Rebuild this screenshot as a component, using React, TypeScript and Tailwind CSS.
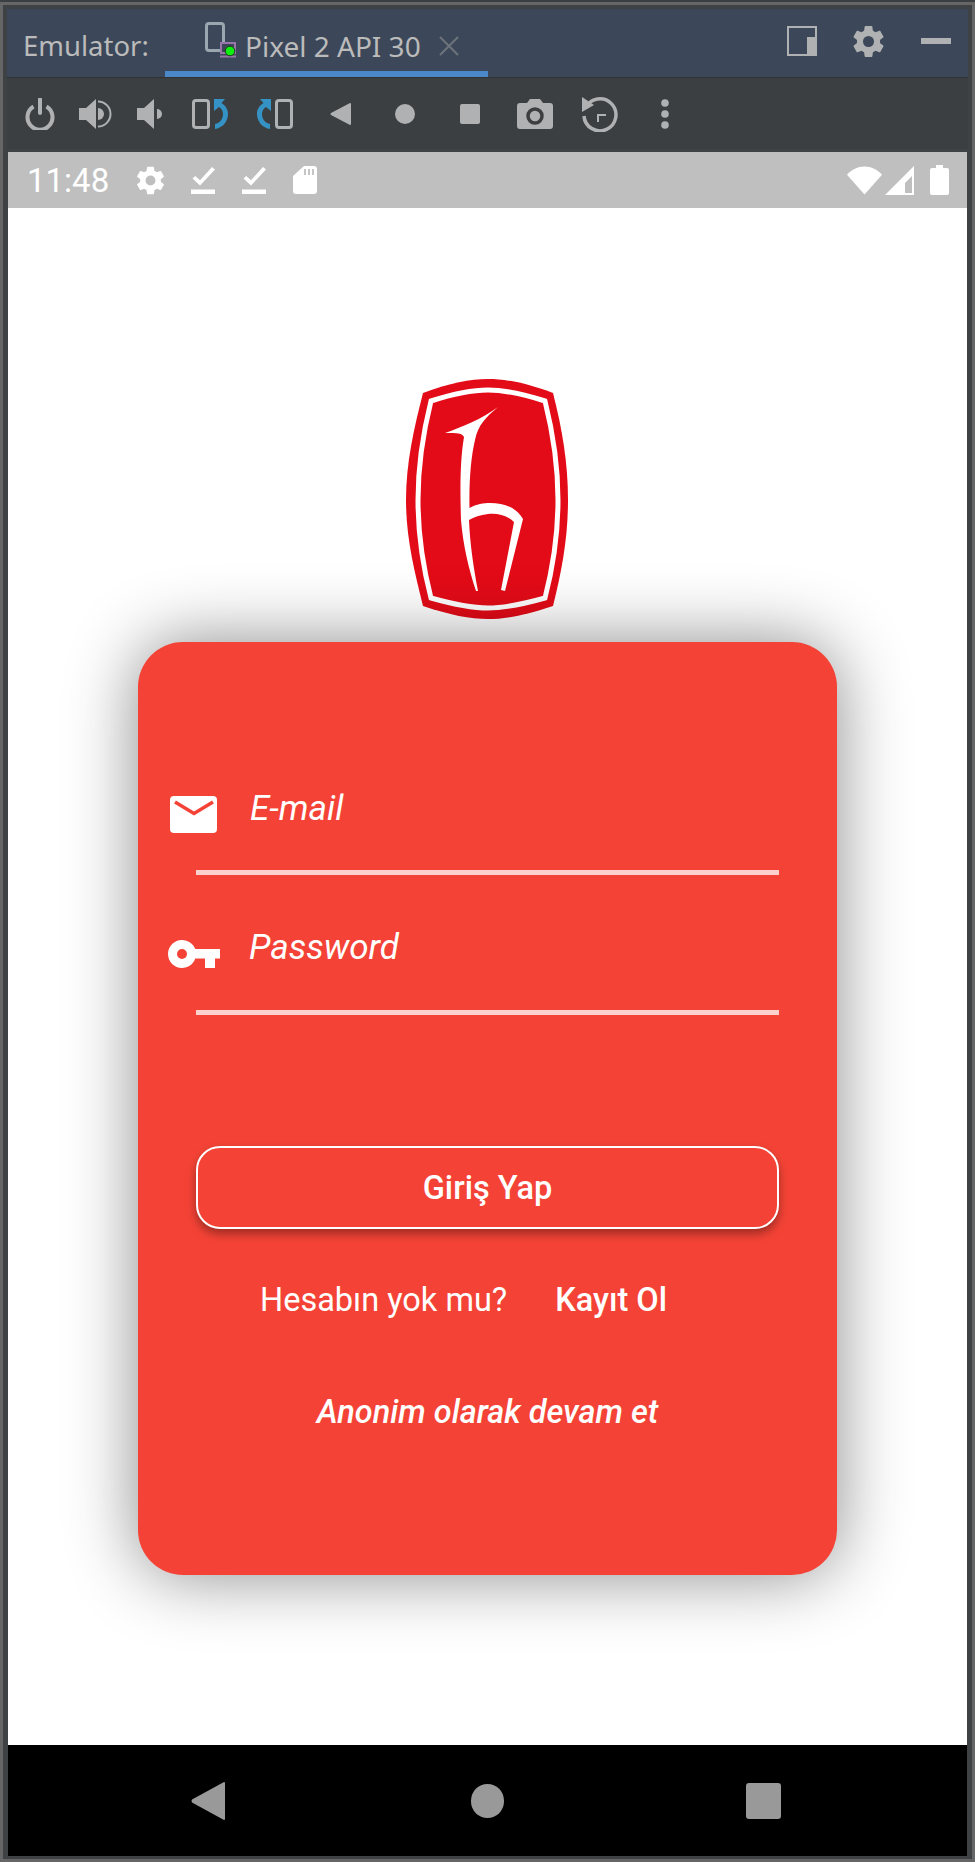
import React from "react";

const G = "#afb1b3";
const Gear = ({ s, c, hole }: { s: number; c: string; hole: string }) => (
  <svg width={s} height={s} viewBox="0 0 24 24">
    <path fill={c} d="M19.43 12.98c.04-.32.07-.64.07-.98s-.03-.66-.07-.98l2.11-1.65c.19-.15.24-.42.12-.64l-2-3.46c-.12-.22-.39-.3-.61-.22l-2.49 1c-.52-.4-1.08-.73-1.69-.98l-.38-2.65C14.46 2.18 14.25 2 14 2h-4c-.25 0-.46.18-.49.42l-.38 2.65c-.61.25-1.17.59-1.69.98l-2.49-1c-.23-.09-.49 0-.61.22l-2 3.46c-.13.22-.07.49.12.64l2.11 1.65c-.04.32-.07.65-.07.98s.03.66.07.98l-2.11 1.65c-.19.15-.24.42-.12.64l2 3.46c.12.22.39.3.61.22l2.49-1c.52.4 1.08.73 1.69.98l.38 2.65c.03.24.24.42.49.42h4c.25 0 .46-.18.49-.42l.38-2.65c.61-.25 1.17-.59 1.69-.98l2.49 1c.23.09.49 0 .61-.22l2-3.46c.12-.22.07-.49-.12-.64l-2.11-1.65z" />
    <circle cx="12" cy="12" r="3.600" fill={hole} />
  </svg>
);
const CheckBar = () => (
  <svg width="24" height="28" viewBox="0 0 24 28" fill="white">
    <path d="M0 23.500h24v4.500H0z" />
    <path d="M1.500 12.500 4.300 10 9 14.300 21 1l3 2.500L9 19.500z" />
  </svg>
);
const Rotate = ({ flip }: { flip?: boolean }) => (
  <svg width="36" height="30" viewBox="0 0 36 30" style={flip ? { transform: "scaleX(-1)" } : undefined}>
    <rect x="1.500" y="1.500" width="15" height="27" rx="2.500" fill="none" stroke={G} strokeWidth="3" />
    <path fill="#3592c4" d="M22 0h11l-3.500 4C34 7 36 10.500 36 15c0 8-6 14-13 15v-5c5-1 8-5 8-10 0-2.500-1-5-4-7l-5 4z" />
  </svg>
);

function TabBar() {
  return (
    <div className="flex h-[69px] items-center border-b border-[#323232] bg-[#3c4859] text-[#bbbbbb] [font-family:'Noto_Sans',sans-serif]">
      <span className="ml-[16px] w-[142px] pt-[6px] text-[27.5px] leading-none">Emulator:</span>
      <div className="relative flex h-[68px] w-[323px] items-center pl-[40px]">
        <svg width="32" height="36" viewBox="0 0 32 36" className="mb-[6px] shrink-0">
          <rect x="1.500" y="1.500" width="17" height="27" rx="2.500" fill="none" stroke="#9aa7b0" strokeWidth="3" />
          <rect x="16" y="21" width="14" height="10" fill="#3c4859" stroke="#9876aa" strokeWidth="2" />
          <path d="M15 34.500h16" stroke="#9876aa" strokeWidth="2" />
          <circle cx="25" cy="29" r="4.800" fill="#10f010" stroke="#1b3a1b" strokeWidth="1" />
        </svg>
        <span className="ml-[8px] whitespace-nowrap pt-[6px] text-[28px] leading-none">Pixel 2 API 30</span>
        <svg width="20" height="20" viewBox="0 0 20 20" className="ml-[18px] mt-[6px] shrink-0">
          <path d="M1 1l18 18M19 1L1 19" stroke="#6d737b" strokeWidth="2" />
        </svg>
        <div className="absolute bottom-0 left-0 h-[6px] w-full bg-[#4a88c7]" />
      </div>
      <div className="ml-auto mr-[17px] flex items-center gap-[34px] pb-[4px]">
        <svg width="30" height="30" viewBox="0 0 30 30">
          <rect x="1" y="1" width="28" height="28" fill="none" stroke={G} strokeWidth="2" />
          <path fill={G} d="M20 11h9v18H20z" />
        </svg>
        <div className="-ml-[1px]">
          <Gear s={37} c={G} hole="#3c4859" />
        </div>
        <div className="h-[6px] w-[30px] bg-[#afb1b3]" />
      </div>
    </div>
  );
}

function Toolbar() {
  return (
    <div className="flex h-[71px] items-center bg-[#3c3f41] pl-[18px]">
      <svg width="30" height="32" viewBox="0 0 30 32">
        <path d="M8.500 8.500a12.500 12.500 0 1 0 13 0" fill="none" stroke={G} strokeWidth="4" />
        <path d="M15 1v14" stroke={G} strokeWidth="4" strokeLinecap="round" />
      </svg>
      <svg width="34" height="30" viewBox="0 0 34 30" className="ml-[24px]">
        <path fill={G} d="M0 9h7l10-9v30L7 21H0z" />
        <path fill={G} d="M19 9a6 6 0 0 1 0 12z" />
        <path fill="none" stroke={G} strokeWidth="2" d="M19 2.500a12.500 12.500 0 0 1 0 25" />
      </svg>
      <svg width="26" height="30" viewBox="0 0 26 30" className="ml-[24px]">
        <path fill={G} d="M0 9h7l10-9v30L7 21H0z" />
        <path fill={G} d="M20 10a5 5 0 0 1 0 10z" />
      </svg>
      <div className="ml-[29px]"><Rotate /></div>
      <div className="ml-[29px]"><Rotate flip /></div>
      <svg width="21" height="22" viewBox="0 0 21 22" className="ml-[37px]">
        <path fill={G} d="M20 0q1 0 1 1v20q0 1-1 1L1 12q-1-1 0-2z" />
      </svg>
      <div className="ml-[44px] h-[20px] w-[20px] rounded-full bg-[#afb1b3]" />
      <div className="ml-[45px] h-[20px] w-[20px] rounded-[2px] bg-[#afb1b3]" />
      <svg width="36" height="30" viewBox="0 0 36 30" className="ml-[37px]">
        <path fill={G} d="M3 4h7l3-4h10l3 4h7q3 0 3 3v20q0 3-3 3H3q-3 0-3-3V7q0-3 3-3z" />
        <circle cx="18" cy="17" r="7" fill={G} stroke="#3c3f41" strokeWidth="3.500" />
      </svg>
      <svg width="36" height="36" viewBox="0 0 36 36" className="ml-[29px]">
        <path d="M3.500 12A16 16 0 1 1 2 20" fill="none" stroke={G} strokeWidth="3.500" />
        <path fill={G} d="M0 1l12 8-12 7z" />
        <path d="M24 19H16v7" fill="none" stroke={G} strokeWidth="2" />
      </svg>
      <svg width="8" height="30" viewBox="0 0 8 30" className="ml-[43px]">
        <circle cx="4" cy="4" r="3.800" fill={G} />
        <circle cx="4" cy="15" r="3.800" fill={G} />
        <circle cx="4" cy="26" r="3.800" fill={G} />
      </svg>
    </div>
  );
}

function StatusBar() {
  return (
    <div className="flex h-[56px] items-center bg-[#bfbfbf] pl-[19px] pr-[18px] text-white">
      <span className="w-[107px] text-[33px] leading-none">11:48</span>
      <Gear s={33} c="white" hole="#bfbfbf" />
      <div className="ml-[24px]"><CheckBar /></div>
      <div className="ml-[27px]"><CheckBar /></div>
      <svg width="24" height="28" viewBox="0 0 24 28" className="ml-[27px]">
        <path fill="white" d="M11 0h10q3 0 3 3v22q0 3-3 3H3q-3 0-3-3V10z" />
        <path d="M12 3v6M16 3v6M20 3v6" stroke="#bfbfbf" strokeWidth="1.800" />
      </svg>
      <div className="ml-auto flex items-center">
        <svg width="35" height="29" viewBox="0 0 36 29">
          <path fill="white" d="M0 8.500C5 3 11 0 18 0s13 3 18 8.500L18 29z" />
        </svg>
        <svg width="29" height="29" viewBox="0 0 29 29" className="ml-[3px]">
          <path fill="white" d="M29 0v29H0z" />
          <path fill="#bfbfbf" d="M20 17v10h7V10z" />
        </svg>
        <svg width="19" height="30" viewBox="0 0 19 30" className="ml-[16px]">
          <path fill="white" d="M6 0h7v3h4q2 0 2 2v23q0 2-2 2H2q-2 0-2-2V5q0-2 2-2h4z" />
        </svg>
      </div>
    </div>
  );
}

function Logo() {
  return (
    <svg width="164" height="242" viewBox="16 13 164 242" className="block">
      <path fill="#e30b17" d="M33 28C60 18 80 14 98 14s38 4 65 14c9 35 15 70 15 107s-6 70-15 106c-27 9-47 13-65 13s-38-4-65-13C24 205 16 172 16 135S24 63 33 28z" />
      <path fill="none" stroke="white" strokeWidth="5" d="M41 36c25-8 42-11 57-11s32 3 57 11c8 32 13 65 13 99s-5 67-13 98c-25 7-42 10-57 10s-32-3-57-10C33 202 28 169 28 135s5-67 13-99z" />
      <path fill="white" d="M55 68C72 62 92 54 108 42 96 52 88 60 85 75 81 92 79 115 79.500 143 86 139 94 138 100 138 115 138 127 143 133 154L115 226 111 225 124 157C117 150 107 148 98 149 90 150 84 152 79 155 80 180 84 205 88 226L86 226C79 205 73 180 71 155 70 125 70 95 74 72 72 68 68 68 55 68Z" />
    </svg>
  );
}

export default function App() {
  return (
    <div className="h-[1862px] w-[975px] overflow-hidden bg-[#3c3f41] pt-[2px]">
      <div className="h-[1860px] border-[3px] border-[#666666] bg-[#3f4245] pt-[4px]">
        <div className="ml-[4px] mr-[4px]">
          <TabBar />
          <Toolbar />
        </div>
        <div className="h-[3px]" />
        <div className="ml-[5px] mr-[5px] [font-family:Roboto,sans-serif]">
          <StatusBar />
          <div className="flex h-[1537px] flex-col items-center bg-white">
            <div className="mt-[170px]"><Logo /></div>
            <div className="mt-[22px] h-[933px] w-[699px] rounded-[45px] bg-[#f44336] pt-[150px] shadow-[0_0_70px_rgba(0,0,0,0.46)]">
              <div className="h-[140px]">
                <div className="flex h-[38px] items-start">
                  <div className="w-[112px] shrink-0 pl-[32px] pt-[4px]">
                    <svg width="47" height="37" viewBox="0 0 47 37">
                      <rect width="47" height="37" rx="4" fill="white" />
                      <path d="M5 6l19 11.500L43 6" fill="none" stroke="#f44336" strokeWidth="3.500" />
                    </svg>
                  </div>
                  <span className="-mt-[2px] text-[35px] italic leading-[38px] text-white">E-mail</span>
                </div>
                <div className="mx-[58px] mt-[40px] h-[5px] bg-[#fbd0cd]" />
              </div>
              <div className="h-[140px]">
                <div className="flex h-[38px] items-start">
                  <div className="w-[112px] shrink-0 pl-[30px] pt-[8px]">
                    <svg width="52" height="28" viewBox="0 0 52 28">
                      <path fill="white" fillRule="evenodd" d="M14 0C20 0 25 3.500 27.300 9H52v9.500h-5V28H37v-9.500h-9.700C25 24.500 20 28 14 28 6.300 28 0 21.700 0 14S6.300 0 14 0zm0 9a5 5 0 1 0 0 10 5 5 0 0 0 0-10z" />
                    </svg>
                  </div>
                  <span className="-ml-[1px] -mt-[3px] text-[35px] italic leading-[38px] text-white">Password</span>
                </div>
                <div className="mx-[58px] mt-[40px] h-[5px] bg-[#fbd0cd]" />
              </div>
              <button className="mx-[58px] mt-[74px] block h-[83px] w-[583px] rounded-[24px] border-2 border-white bg-[#f44336] pt-[2px] text-[32.5px] font-medium leading-none text-white shadow-[0_5px_10px_rgba(0,0,0,0.35)]">
                Giriş Yap
              </button>
              <div className="mt-[52px] flex h-[38px] items-center pl-[122px] text-[32.5px] leading-none text-white">
                <span>Hesabın yok mu?</span>
                <span className="ml-[48px] font-medium">Kayıt Ol</span>
              </div>
              <div className="mt-[74px] text-center text-[32.5px] font-medium italic leading-[38px] text-white">
                Anonim olarak devam et
              </div>
            </div>
          </div>
          <div className="flex h-[111px] items-center bg-black pl-[183px]">
            <svg width="34" height="38" viewBox="0 0 34 38">
              <path fill="#999999" d="M33 0q1 0 1 1v36q0 1-1 1L1 20.500q-1-1.500 0-3z" />
            </svg>
            <div className="ml-[246px] h-[34px] w-[33px] rounded-full bg-[#999999]" />
            <div className="ml-[242px] h-[36px] w-[35px] rounded-[3px] bg-[#999999]" />
          </div>
        </div>
      </div>
    </div>
  );
}
